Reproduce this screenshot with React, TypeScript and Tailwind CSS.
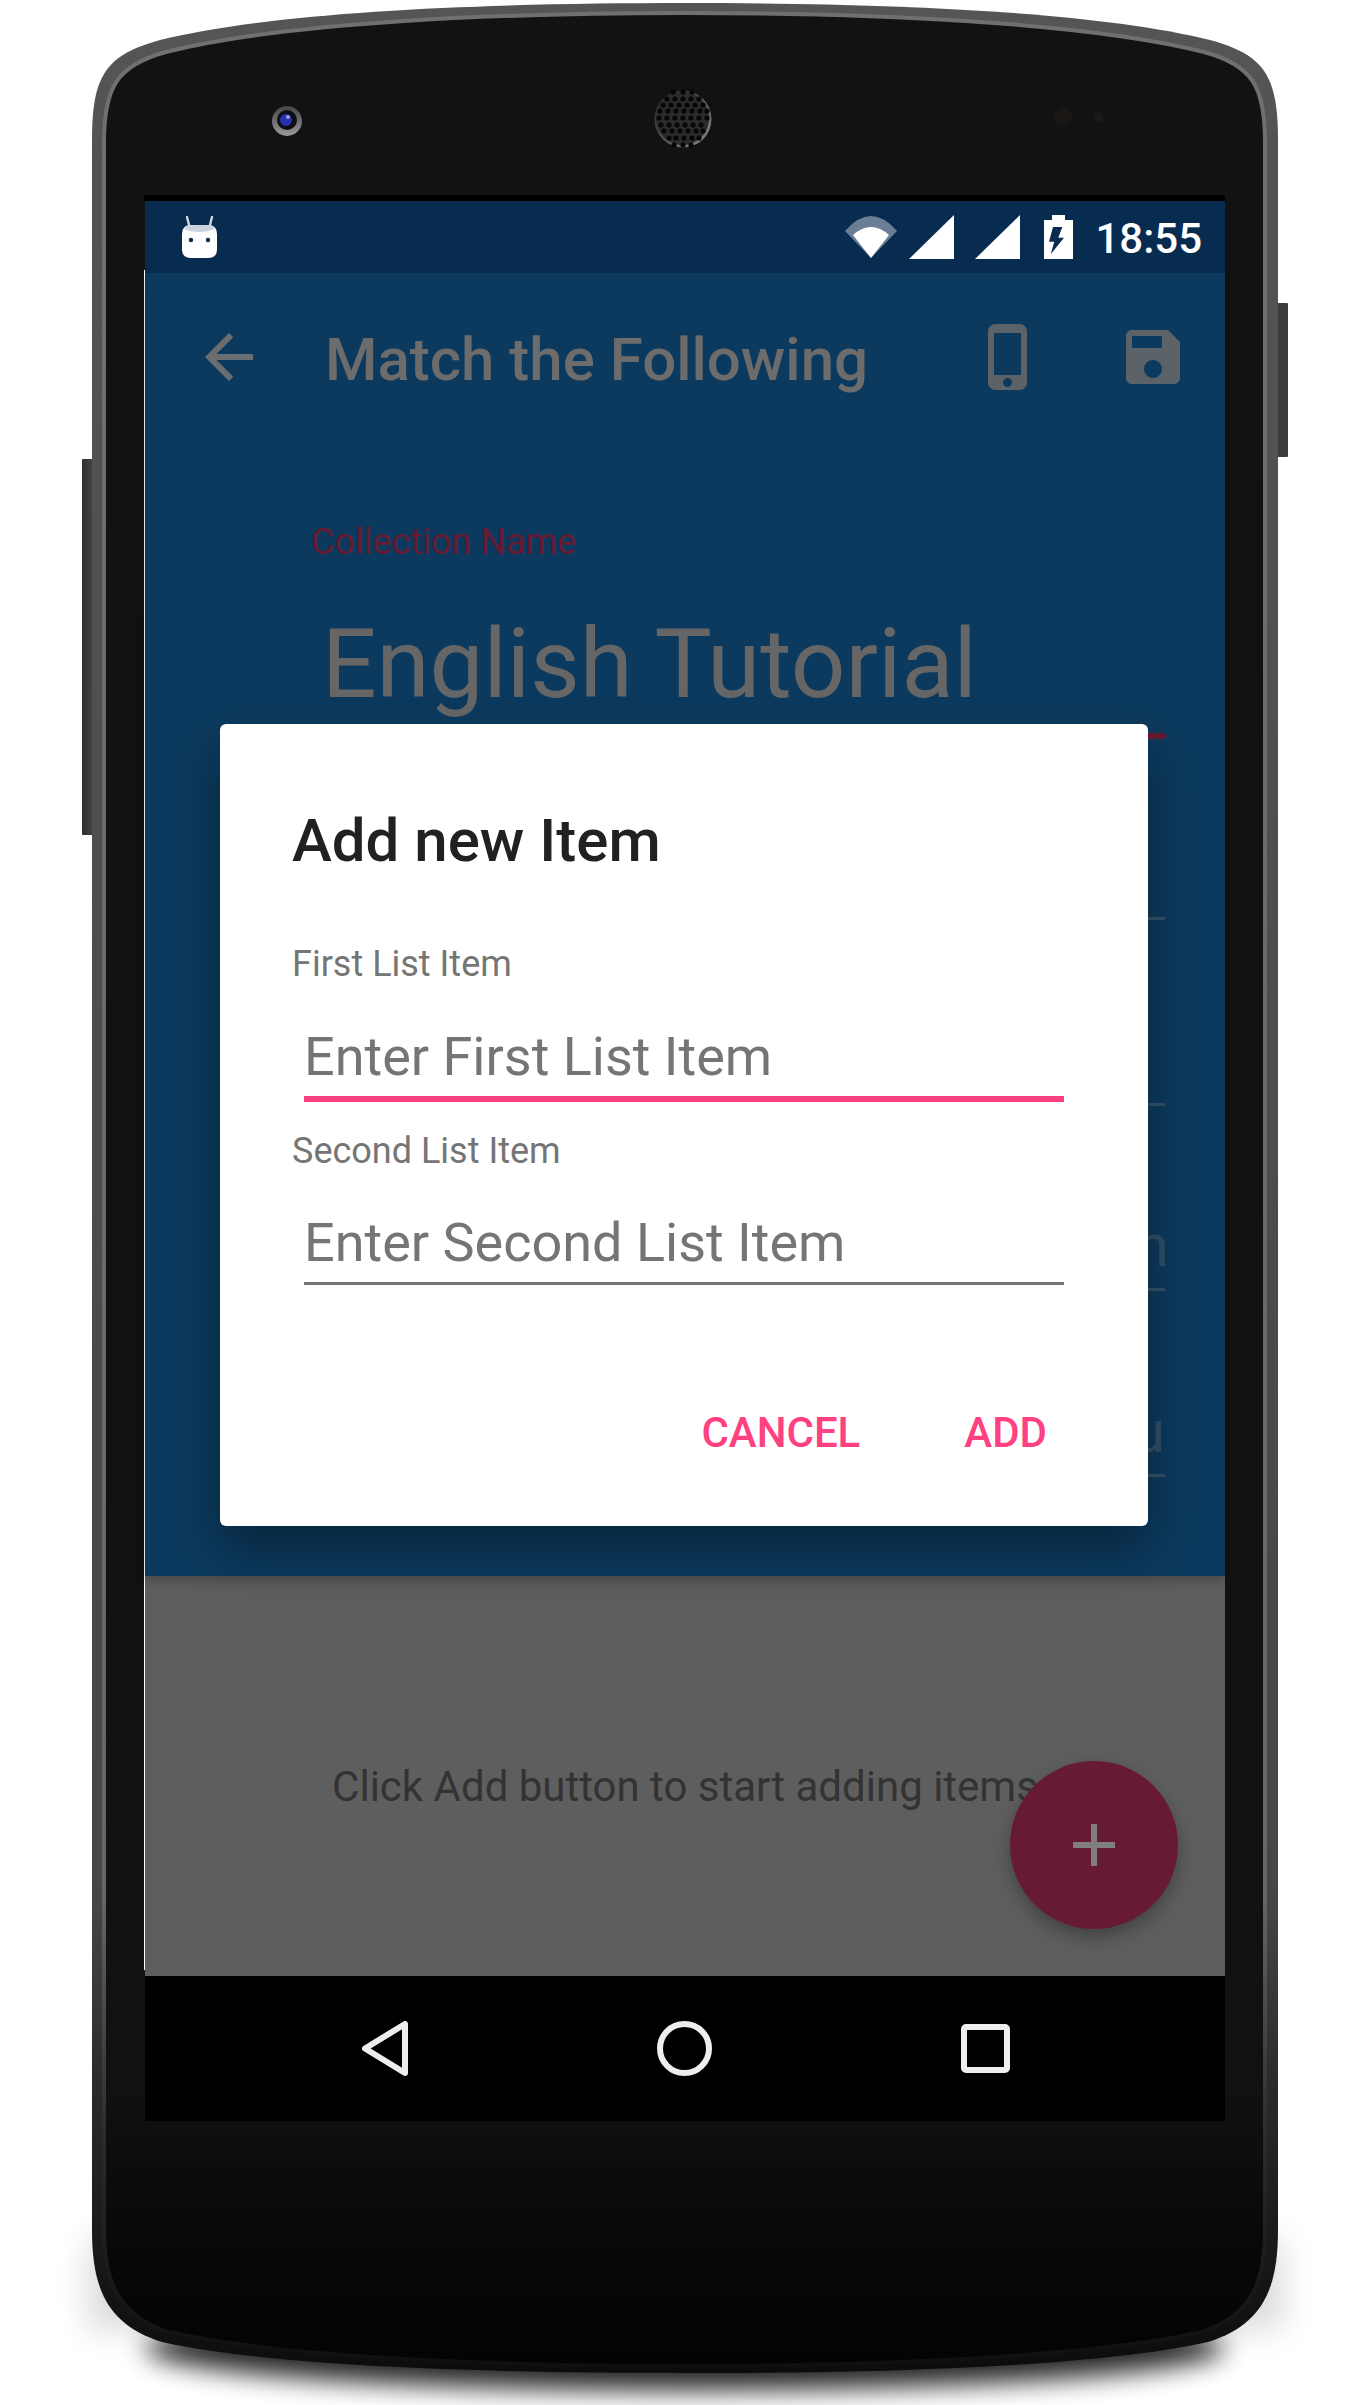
const SPEAKER_ROWS = [
  { y: 92, xs: [-10, 0, 9] },
  { y: 99, xs: [-16, -8, 0, 8, 16] },
  { y: 105, xs: [-20, -12, -4, 4, 12, 20] },
  { y: 111, xs: [-23, -15, -7, 1, 9, 17, 24] },
  { y: 118, xs: [-24, -16, -8, 0, 8, 16, 24] },
  { y: 125, xs: [-22, -14, -6, 2, 10, 18] },
  { y: 131, xs: [-19, -11, -3, 5, 13, 20] },
  { y: 138, xs: [-14, -7, 1, 9, 16] },
  { y: 145, xs: [-9, 0, 8] },
];

function PhoneBody() {
  return (
    <svg className="absolute inset-0" width="1370" height="2405" viewBox="0 0 1370 2405">
      <defs>
        <linearGradient id="band" x1="0" y1="0" x2="0" y2="1">
          <stop offset="0" stopColor="#555555" />
          <stop offset="0.8" stopColor="#464646" />
          <stop offset="0.88" stopColor="#2a2a2a" />
          <stop offset="1" stopColor="#0c0c0c" />
        </linearGradient>
        <linearGradient id="edge" x1="0" y1="0" x2="0" y2="1">
          <stop offset="0" stopColor="#707070" />
          <stop offset="0.8" stopColor="#666666" />
          <stop offset="0.9" stopColor="#2c2c2c" />
          <stop offset="1" stopColor="#0f0f0f" />
        </linearGradient>
        <linearGradient id="face" x1="0" y1="0" x2="0" y2="1">
          <stop offset="0" stopColor="#121212" />
          <stop offset="0.88" stopColor="#111111" />
          <stop offset="0.95" stopColor="#080808" />
          <stop offset="1" stopColor="#030303" />
        </linearGradient>
        <linearGradient id="btn" x1="0" y1="0" x2="1" y2="0">
          <stop offset="0" stopColor="#2f2f2f" />
          <stop offset="1" stopColor="#4a4a4a" />
        </linearGradient>
        <linearGradient id="rim" x1="0" y1="0" x2="1" y2="1">
          <stop offset="0" stopColor="#1f1f1f" />
          <stop offset="1" stopColor="#8a8a8a" />
        </linearGradient>
        <linearGradient id="lens" x1="0" y1="0" x2="0" y2="1">
          <stop offset="0" stopColor="#444444" />
          <stop offset="1" stopColor="#999999" />
        </linearGradient>
        <filter id="soft" x="-20%" y="-100%" width="140%" height="300%">
          <feGaussianBlur stdDeviation="13" />
        </filter>
        <filter id="softer" x="-20%" y="-50%" width="140%" height="200%">
          <feGaussianBlur stdDeviation="16" />
        </filter>
      </defs>

      {/* shadow under the handset */}
      <rect x="88" y="2240" width="1195" height="90" fill="#000000" opacity="0.14" filter="url(#softer)" />
      <ellipse cx="685" cy="2348" rx="540" ry="42" fill="#000000" opacity="0.85" filter="url(#soft)" />

      {/* side buttons */}
      <rect x="82" y="459" width="14" height="376" rx="1" fill="url(#btn)" />
      <rect x="1274" y="303" width="14" height="154" rx="1" fill="#3c3c3c" />

      {/* body */}
      <path
        d="M92 2230 L92 140 C92 75 106 55 160 40 C280 10 500 3 685 3 C870 3 1090 10 1210 40 C1264 55 1278 75 1278 140 L1278 2230 C1278 2290 1262 2325 1208 2342 C1090 2368 870 2373 685 2373 C500 2373 280 2368 162 2342 C108 2325 92 2290 92 2230 Z"
        fill="url(#band)"
      />
      <path
        d="M104 2230 L104 142 C104 86 118 65 166 52 C285 22 500 13 685 13 C870 13 1085 22 1204 52 C1252 65 1265 86 1265 142 L1265 2230 C1265 2285 1250 2316 1202 2332 C1085 2358 870 2366 685 2366 C500 2366 285 2358 168 2332 C120 2316 104 2285 104 2230 Z"
        fill="url(#face)"
        stroke="url(#edge)"
        strokeWidth="4"
      />

      {/* front camera */}
      <circle cx="287" cy="121" r="15" fill="url(#lens)" />
      <circle cx="287" cy="120" r="10" fill="#0d0d14" />
      <circle cx="286" cy="120" r="6" fill="#2a2fb0" />
      <circle cx="288" cy="117" r="2" fill="#9aa0e0" />

      {/* earpiece */}
      <circle cx="683" cy="119" r="28.5" fill="url(#rim)" />
      <circle cx="682.5" cy="118.5" r="26.5" fill="#2b2b2b" />
      {SPEAKER_ROWS.map((row) =>
        row.xs.map((dx) => <circle key={`${row.y}-${dx}`} cx={683 + dx} cy={row.y} r="2.6" fill="#060606" />),
      )}

      {/* sensors */}
      <circle cx="1063" cy="117" r="9" fill="#1a1714" />
      <circle cx="1099" cy="117" r="5" fill="#1b1917" />
    </svg>
  );
}

function StatusBar() {
  return (
    <div className="flex h-[72px] items-center bg-[#082b50] text-white">
      <svg className="ml-[37px]" width="35" height="42" viewBox="0 0 35 42">
        <path d="M7 9 L5 1 M28 9 L30 1" stroke="#cfd8e0" strokeWidth="2.4" strokeLinecap="round" />
        <path d="M9 9 H26 Q35 9 35 18 V33 Q35 42 26 42 H9 Q0 42 0 33 V18 Q0 9 9 9 Z" fill="#ffffff" />
        <path d="M2 13 Q4 9 9 9 H26 Q31 9 33 13 Q26 16 17.500 16 Q9 16 2 13 Z" fill="#cbd4dc" />
        <circle cx="9" cy="24" r="2.200" fill="#082b50" />
        <circle cx="26" cy="24" r="2.200" fill="#082b50" />
      </svg>
      <svg className="ml-auto" width="52" height="42" viewBox="0 0 52 42">
        <path d="M0 15 Q26 -15 52 15 L26 42 Z" fill="#ffffff" opacity="0.4" />
        <path d="M8 19 Q26 3 44 19 L26 42 Z" fill="#ffffff" />
      </svg>
      <svg className="ml-[12px]" width="45" height="44" viewBox="0 0 45 44">
        <path d="M45 0 V44 H0 Z" fill="#ffffff" />
      </svg>
      <svg className="ml-[21px]" width="45" height="44" viewBox="0 0 45 44">
        <path d="M45 0 V44 H0 Z" fill="#ffffff" />
      </svg>
      <svg className="ml-[24px]" width="29" height="44" viewBox="0 0 29 44">
        <path d="M8 0 H21 V5 H29 V44 H0 V5 H8 Z" fill="#ffffff" />
        <path d="M9 12 H18.300 L14.300 22.700 H20 L6.700 39.300 L10.300 26.700 H5 Z" fill="#082b50" />
      </svg>
      <span className="mt-[3px] mr-[23px] ml-[22px] font-['Roboto',sans-serif] text-[42px] leading-[72px] font-medium">
        18:55
      </span>
    </div>
  );
}

function Toolbar() {
  return (
    <div className="flex h-[168px] items-center pl-[48px]">
      <svg width="72" height="72" viewBox="0 0 24 24" fill="#6b6e70">
        <path d="M20 11H7.830l5.590-5.590L12 4l-8 8 8 8 1.410-1.410L7.830 13H20v-2z" />
      </svg>
      <span className="mt-[6px] ml-[60px] font-['Roboto',sans-serif] text-[60px] leading-[72px] font-medium text-[#6c6c6c]">
        Match the Following
      </span>
      <svg className="ml-auto" width="72" height="72" viewBox="0 0 24 24" fill="#5b6368">
        <path d="M15.500 1h-8C6.120 1 5 2.120 5 3.500v17C5 21.880 6.120 23 7.500 23h8c1.380 0 2.500-1.120 2.500-2.500v-17C18 2.120 16.880 1 15.500 1zm-4 21c-.83 0-1.500-.67-1.500-1.500s.67-1.500 1.500-1.500 1.500.67 1.500 1.500-.67 1.500-1.500 1.500zm4.500-4H7V4h9v14z" />
      </svg>
      <svg className="mr-[36px] ml-[72px]" width="72" height="72" viewBox="0 0 24 24" fill="#5b6368">
        <path d="M17 3H5c-1.110 0-2 .9-2 2v14c0 1.100.89 2 2 2h14c1.100 0 2-.9 2-2V7l-4-4zm-5 16c-1.660 0-3-1.340-3-3s1.340-3 3-3 3 1.340 3 3-1.340 3-3 3zm3-10H5V5h10v4z" />
      </svg>
    </div>
  );
}

function Form() {
  return (
    <div className="pl-[166px] font-['Roboto',sans-serif]">
      <div className="mt-[77px] text-[36px] leading-[48px] text-[#661b33]">Collection Name</div>
      <div className="mt-[38px] ml-[11px] text-[96px] leading-[120px] text-[#666666]">English Tutorial</div>
      <div className="mt-[9px] ml-[11px] h-[6px] w-[843px] bg-[#661b33]" />
      <div className="ml-[11px] h-[181px] w-[843px] border-b-[3px] border-[#35536b]" />
      <div className="ml-[11px] h-[185.500px] w-[843px] border-b-[3px] border-[#35536b]" />
      <div className="ml-[11px] flex h-[185.500px] w-[843px] items-end justify-end border-b-[3px] border-[#35536b] pb-[6px] text-[60px] leading-[72px] text-[#2f5068]">
        <span className="-mr-[4px]">n</span>
      </div>
      <div className="ml-[11px] flex h-[185.500px] w-[843px] items-end justify-end border-b-[3px] border-[#35536b] pb-[6px] text-[60px] leading-[72px] text-[#2f5068]">
        <span>u</span>
      </div>
    </div>
  );
}

function AddItemDialog() {
  return (
    <div className="absolute top-[724px] left-[75px] z-20 h-[802px] w-[928px] rounded-[6px] bg-white pt-[81px] pl-[72px] font-['Roboto',sans-serif] shadow-[0_24px_50px_rgba(0,0,0,0.36)]">
      <div className="text-[60px] leading-[72px] font-medium text-[#212121]">Add new Item</div>
      <div className="mt-[63px] text-[36px] leading-[48px] text-[#757575]">First List Item</div>
      <div className="mt-[33px] ml-[12px] w-[760px] border-b-[6px] border-[#ff4081] pb-[3px] text-[54px] leading-[72px] text-[#757575]">
        Enter First List Item
      </div>
      <div className="mt-[25px] text-[36px] leading-[48px] text-[#757575]">Second List Item</div>
      <div className="mt-[32px] ml-[12px] w-[760px] border-b-[3px] border-[#757575] pb-[3px] text-[54px] leading-[72px] text-[#757575]">
        Enter Second List Item
      </div>
      <div className="mt-[118px] flex justify-end gap-[104px] pr-[101px] text-[42px] leading-[60px] font-medium text-[#ff4081]">
        <span>CANCEL</span>
        <span>ADD</span>
      </div>
    </div>
  );
}

function NavBar() {
  return (
    <div className="flex h-[145px] items-center bg-black pl-[217px]">
      <svg width="46" height="55" viewBox="0 0 46 55" fill="none" stroke="#eeeeee" strokeWidth="6" strokeLinejoin="round">
        <path d="M43 3 V52 L3 27.500 Z" />
      </svg>
      <svg className="ml-[249px]" width="55" height="55" viewBox="0 0 55 55" fill="none" stroke="#eeeeee" strokeWidth="6">
        <circle cx="27.500" cy="27.500" r="24.500" />
      </svg>
      <svg className="ml-[249px]" width="49" height="49" viewBox="0 0 49 49" fill="none" stroke="#eeeeee" strokeWidth="6">
        <rect x="3" y="3" width="43" height="43" rx="2" />
      </svg>
    </div>
  );
}

export default function App() {
  return (
    <div className="relative h-[2405px] w-[1370px] overflow-hidden bg-white">
      <PhoneBody />
      <div className="relative ml-[145px] w-[1080px] pt-[195px]">
        {/* 1px white sliver down the left of the screenshot */}
        <div className="absolute top-[270px] -left-px h-[1700px] w-px bg-white" />
        <div className="-ml-px h-[6px] w-[1081px] bg-black" />
        <StatusBar />
        <div className="relative z-10 h-[1303px] bg-[#0c3a5e] shadow-[0_5px_10px_rgba(0,0,0,0.22)]">
          <Toolbar />
          <Form />
        </div>
        <div className="relative h-[400px] bg-[#5e5e5e] pt-[181px] text-center font-['Roboto',sans-serif] text-[42px] leading-[60px] text-[#333333]">
          Click Add button to start adding items
          <div className="absolute top-[185px] left-[865px] flex h-[168px] w-[168px] items-center justify-center rounded-full bg-[#661b33] shadow-[0_8px_18px_rgba(0,0,0,0.3)]">
            <svg width="42" height="42" viewBox="0 0 42 42" fill="#7f7f7f">
              <path d="M18 0 H24 V18 H42 V24 H24 V42 H18 V24 H0 V18 H18 Z" />
            </svg>
          </div>
        </div>
        <NavBar />
        <AddItemDialog />
      </div>
    </div>
  );
}
